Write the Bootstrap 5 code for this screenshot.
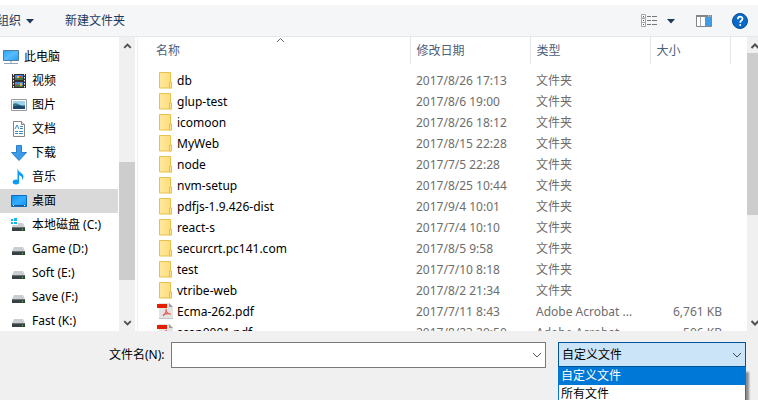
<!DOCTYPE html>
<html lang="zh-CN">
<head>
<meta charset="utf-8">
<meta name="viewport" content="width=device-width, initial-scale=1">
<title>打开</title>
<link href="https://cdn.jsdelivr.net/npm/bootstrap@5.3.0/dist/css/bootstrap.min.css" rel="stylesheet">
<style>
body{font-family:"Noto Sans","Noto Sans CJK SC",sans-serif;font-size:12px;line-height:20px;color:#000;background:#fff}
button{line-height:20px}
.dialog{height:100vh}
.toolbar{margin-top:5px;height:32px;background:#f5f6f7;border-bottom:1px solid #e6e7e8;overflow:hidden}
.tool{border:0;background:none;padding:0;color:#1e395b}
.organize{margin-left:-3px}
.new-folder{margin-left:30px}
.view-tools{margin-right:10px}
.tree{width:119px;padding-top:8px}
.tree a{height:24px;padding-left:11px;gap:5px;color:#000;margin-right:1px;white-space:nowrap}
.tree a.root{padding-left:3px;gap:5px}
.tree a.active{background:#d9d9d9}
.rail{width:16px;background:#f0f0f0}
.rail-main{width:11px}
.rail button{border:0;padding:0;background:none;height:16px;width:16px;line-height:0}
.rail .thumb{background:#cdcdcd}
.tree-before{flex:109}
.tree-thumb{flex:118}
.tree-after{flex:35}
.main-thumb{flex:162}
.main-after{flex:100}
.files{border-left:1px solid #f0f0f0;margin-left:2px;position:relative}
.files table{table-layout:fixed;width:100%}
.files th{font-weight:400;color:#4c607a;height:27px;padding:0 0 0 6px;border-right:1px solid #e5e5e5}
.files th:first-child{padding-left:18px}
.files th:last-child{border:0}
.files td{height:21px;padding:0 0 0 6px;color:#6d6d6d;line-height:21px;white-space:nowrap}
.files td:first-child{padding-left:21px;color:#000}
.files tbody::before{content:"";display:block;height:6px}
.files td svg{vertical-align:top;margin:2px 4px 0 0}
.files td .pdf-icon{margin-left:-2px}
.files td.kb{padding-right:8px;text-align:right}
.c-date,.c-type{width:120px}
.c-size{width:80px}
.c-rest{width:17px}
.sort-mark{position:absolute;left:138px;top:0}
.name-bar{height:69px;background:#f0f0f0;padding:11px 12px 0 109px}
.name-bar label{margin-right:6px;line-height:26px}
.file-name{border:1px solid #7a7a7a;background:#fff;height:26px}
.file-name input{border:0;outline:0;background:none;min-width:0}
.file-name button{border:0;background:none;width:16px;padding:0;line-height:0}
.filter{width:188px;margin-left:12px}
.filter select{appearance:none;width:100%;height:25px;border:1px solid #005499;border-radius:0;background:#cce4f7;padding:0 3px;color:#000;display:block}
.filter-arrow{position:absolute;right:4px;top:10px;pointer-events:none}
.options{position:absolute;top:25px;left:0;width:100%;border:1px solid #0078d7;border-top:0;background:#fff;box-shadow:3px 5px 2px #8c8c8c;line-height:18px;margin:0;padding:0;list-style:none}
.options li{padding:0 2px;height:18px}
.options .chosen{background:#0078d7;color:#fff}
</style>
</head>
<body>
<svg class="position-absolute" width="0" height="0" aria-hidden="true">
<defs>
<linearGradient id="blue" x1="0" y1="0" x2="1" y2="1"><stop stop-color="#2ca7f5"/><stop offset=".5" stop-color="#55bdff"/><stop offset="1" stop-color="#249cf0"/></linearGradient>
<linearGradient id="desk" x1="0" y1="0" x2="1" y2="1"><stop stop-color="#0a8ff0"/><stop offset=".5" stop-color="#35adff"/><stop offset="1" stop-color="#0a8ff0"/></linearGradient>
<linearGradient id="gold"><stop stop-color="#ffe99d"/><stop offset="1" stop-color="#fddc7c"/></linearGradient>
</defs>
<symbol id="folder" viewBox="0 0 14 17"><path d="M.5.5h11v9.500h1v6H.5z" fill="url(#gold)" stroke="#e7c14d"/><path d="M10.500 15.500v-5.500h2v6h-2z" fill="#fbe290" stroke="#e7c14d"/></symbol>
<symbol id="pdf" viewBox="0 0 16 16"><path d="M2 0h10l4 4v12H2z" fill="#e4e4e4"/><path d="M12 0v4h4z" fill="#9c9c9c"/><path d="M2 15.500h14" stroke="#c4c4c4"/><path d="M0 1h10v4H0z" fill="#e61e00"/><path d="M9 6c1 3-1 5-3 7M9 6c-.5 3 2 5 5 5M6 12c2-1 4-2 7-1" fill="none" stroke="#e45b50" stroke-width="1.200"/></symbol>
<symbol id="drive" viewBox="0 0 16 16"><path d="M3 6h9l2 4H1z" fill="#c9ced2"/><path d="M1 10h13v4H1z" fill="#3b4042"/><path d="M1 10h13v1H1z" fill="#6d7376"/><path d="M11 12h1v1h-1z" fill="#36ef46"/></symbol>
<symbol id="up" viewBox="0 0 16 16"><path d="M4.500 11 8 7.500l3.500 3.500" fill="none" stroke="#505050" stroke-width="2"/></symbol>
<symbol id="down" viewBox="0 0 16 16"><path d="M4.500 6 8 9.500 11.500 6" fill="none" stroke="#505050" stroke-width="2"/></symbol>
</svg>
<div class="dialog d-flex flex-column overflow-hidden">
<header class="toolbar d-flex align-items-center flex-shrink-0">
<button class="tool organize d-flex align-items-center" type="button">组织<svg class="ms-1" width="10" height="6"><path d="M1 1h8L5 5.500z" fill="#1e395b"/></svg></button>
<button class="tool new-folder" type="button">新建文件夹</button>
<div class="view-tools d-flex align-items-center ms-auto">
<button class="tool d-flex align-items-center" type="button" aria-label="更改视图">
<svg width="17" height="13"><path d="M.5.500h4v3.500h-4zM.5 4.500h4v4h-4zM.5 8.500h4v4h-4z" fill="#fff" stroke="#a5a5a5"/><path d="M2 2h1v1H2zM2 6h1v1H2zM2 10h1v1H2z" fill="#555"/><path d="M6 2.500h4m1 0h5M6 6.500h4m1 0h5M6 10.500h4m1 0h5" stroke="#777"/></svg>
<svg class="ms-2" width="10" height="6"><path d="M1 1h8L5 5.500z" fill="#1e395b"/></svg></button>
<button class="tool d-flex ms-3 ps-1" type="button" aria-label="预览窗格"><svg width="16" height="12"><path d="M.5.500h15v11H.5z" fill="#fff" stroke="#858585"/><path d="M0 0h16v2H0z" fill="#858585"/><path d="M4.500 2v9" stroke="#aaa"/><path d="M9 2h6v9H9z" fill="#429be3"/><path d="M12 1h1m1 0h1" stroke="#dfeaf3"/></svg></button>
<button class="tool d-flex ms-3 ps-1" type="button" aria-label="帮助"><svg width="16" height="16"><circle cx="8" cy="8" r="7.500" fill="#0869c9" stroke="#084d94"/><path d="M5.800 6.300c0-3.600 4.700-3.100 4.700-.6 0 1.900-2.300 1.700-2.300 4" fill="none" stroke="#fff" stroke-width="1.700"/><circle cx="8.200" cy="12" r="1" fill="#fff"/></svg></button>
</div>
</header>
<main class="d-flex flex-grow-1 overflow-hidden">
<nav class="tree flex-shrink-0 overflow-hidden" aria-label="文件夹">
<a href="#" class="root d-flex align-items-center text-decoration-none"><svg width="16" height="16"><path d="M.5 1.500h15v10H.5z" fill="url(#blue)" stroke="#4b7f9f"/><path d="M7 12h2v2H7z" fill="#c5cfd7"/><path d="M1 14.500h14" stroke="#8fa4b5"/></svg>此电脑</a>
<a href="#" class="d-flex align-items-center text-decoration-none"><svg width="16" height="16"><path d="M1 1h14v14H1z" fill="#35302d"/><path d="M2.500 1v14m11-14v14" stroke="#eee" stroke-dasharray="1.500 1.500"/><path d="M4 2h8v5H4zM4 9h8v5H4z" fill="#4b87da"/><path d="M4 5h8v2H4zM4 12h8v2H4z" fill="#477142"/><path d="M6 3h2v2H6zM9 10h2v3H9z" fill="#e9b736"/><path d="M9 3h2v2H9zM5 11h2v1H5z" fill="#c94835"/></svg>视频</a>
<a href="#" class="d-flex align-items-center text-decoration-none"><svg width="16" height="16"><path d="M.5 2.500h15v11H.5z" fill="#fff" stroke="#999"/><path d="M2 4h12v8H2z" fill="#9bd3ee"/><path d="M2 7c4-3 7 3 12 1v4H2z" fill="#347788"/><path d="M2 10c4-2 7-2 12 0v2H2z" fill="#1c466e"/></svg>图片</a>
<a href="#" class="d-flex align-items-center text-decoration-none"><svg width="16" height="16"><path d="M2.500.500h8l3 3v12h-11z" fill="#fff" stroke="#858585"/><path d="M10.500.500v3h3" fill="#ddd" stroke="#858585"/><path d="M4 8 6 4l2 4M9 5.500h3M9 7.500h3M4 10.500h3m1 0h4M4 12.500h3m1 0h4" fill="none" stroke="#398bc0"/></svg>文档</a>
<a href="#" class="d-flex align-items-center text-decoration-none"><svg width="16" height="16"><path d="M5.500.500h5v7h5L8 15.500.500 7.500h5z" fill="#3b9aea" stroke="#2d80c9"/></svg>下载</a>
<a href="#" class="d-flex align-items-center text-decoration-none"><svg width="16" height="16"><ellipse cx="5" cy="13" rx="3.300" ry="2.500" fill="#0b9cf5"/><path d="M7 0c0 3.500 6 4 5.500 8-.2 2-1.500 3-1.500 3 1-4-2-4-3-5v7H6.500V0z" fill="#0b9cf5"/></svg>音乐</a>
<a href="#" class="active d-flex align-items-center text-decoration-none" aria-current="true"><svg width="16" height="16"><path d="M.5 2.500h15v11H.5z" fill="url(#desk)" stroke="#0d6dc0"/><path d="M1 12.500h14" stroke="#1e5d96"/><path d="M2 12.500h1m10 0h1" stroke="#e7f4ff"/></svg>桌面</a>
<a href="#" class="d-flex align-items-center text-decoration-none"><svg width="16" height="16"><use href="#drive" width="16" height="16"/><path d="M0 1h7v7H0z" fill="#fff"/><path d="M0 2h2v2H0zM3 1h3v3H3zM0 5h2v2H0zM3 5h3v2H3z" fill="#12b8ee"/></svg>本地磁盘 (C:)</a>
<a href="#" class="d-flex align-items-center text-decoration-none"><svg width="16" height="16"><use href="#drive"/></svg>Game (D:)</a>
<a href="#" class="d-flex align-items-center text-decoration-none"><svg width="16" height="16"><use href="#drive"/></svg>Soft (E:)</a>
<a href="#" class="d-flex align-items-center text-decoration-none"><svg width="16" height="16"><use href="#drive"/></svg>Save (F:)</a>
<a href="#" class="d-flex align-items-center text-decoration-none"><svg width="16" height="16"><use href="#drive"/></svg>Fast (K:)</a>
</nav>
<div class="rail d-flex flex-column flex-shrink-0">
<button type="button" aria-label="向上滚动"><svg width="15" height="16"><use href="#up"/></svg></button>
<div class="tree-before"></div><div class="tree-thumb thumb"></div><div class="tree-after"></div>
<button type="button" aria-label="向下滚动"><svg width="15" height="16"><use href="#down"/></svg></button>
</div>
<section class="files flex-grow-1 overflow-hidden">
<svg class="sort-mark" width="9" height="6"><path d="M1 5 4.500 1.500 8 5" fill="none" stroke="#666"/></svg>
<table>
<colgroup><col><col class="c-date"><col class="c-type"><col class="c-size"><col class="c-rest"></colgroup>
<thead><tr><th>名称</th><th>修改日期</th><th>类型</th><th>大小</th><th></th></tr></thead>
<tbody>
<tr><td><svg width="14" height="17"><use href="#folder"/></svg>db</td><td>2017/8/26 17:13</td><td>文件夹</td><td></td><td></td></tr>
<tr><td><svg width="14" height="17"><use href="#folder"/></svg>glup-test</td><td>2017/8/6 19:00</td><td>文件夹</td><td></td><td></td></tr>
<tr><td><svg width="14" height="17"><use href="#folder"/></svg>icomoon</td><td>2017/8/26 18:12</td><td>文件夹</td><td></td><td></td></tr>
<tr><td><svg width="14" height="17"><use href="#folder"/></svg>MyWeb</td><td>2017/8/15 22:28</td><td>文件夹</td><td></td><td></td></tr>
<tr><td><svg width="14" height="17"><use href="#folder"/></svg>node</td><td>2017/7/5 22:28</td><td>文件夹</td><td></td><td></td></tr>
<tr><td><svg width="14" height="17"><use href="#folder"/></svg>nvm-setup</td><td>2017/8/25 10:44</td><td>文件夹</td><td></td><td></td></tr>
<tr><td><svg width="14" height="17"><use href="#folder"/></svg>pdfjs-1.9.426-dist</td><td>2017/9/4 10:01</td><td>文件夹</td><td></td><td></td></tr>
<tr><td><svg width="14" height="17"><use href="#folder"/></svg>react-s</td><td>2017/7/4 10:10</td><td>文件夹</td><td></td><td></td></tr>
<tr><td><svg width="14" height="17"><use href="#folder"/></svg>securcrt.pc141.com</td><td>2017/8/5 9:58</td><td>文件夹</td><td></td><td></td></tr>
<tr><td><svg width="14" height="17"><use href="#folder"/></svg>test</td><td>2017/7/10 8:18</td><td>文件夹</td><td></td><td></td></tr>
<tr><td><svg width="14" height="17"><use href="#folder"/></svg>vtribe-web</td><td>2017/8/2 21:34</td><td>文件夹</td><td></td><td></td></tr>
<tr><td><svg class="pdf-icon" width="16" height="16"><use href="#pdf"/></svg>Ecma-262.pdf</td><td>2017/7/11 8:43</td><td>Adobe Acrobat ...</td><td class="kb">6,761 KB</td><td></td></tr>
<tr><td><svg class="pdf-icon" width="16" height="16"><use href="#pdf"/></svg>scan0001.pdf</td><td>2017/8/23 20:50</td><td>Adobe Acrobat ...</td><td class="kb">506 KB</td><td></td></tr>
</tbody>
</table>
</section>
<div class="rail rail-main d-flex flex-column flex-shrink-0 overflow-hidden">
<button type="button" aria-label="向上滚动"><svg width="16" height="16"><use href="#up"/></svg></button>
<div class="thumb main-thumb"></div><div class="main-after"></div>
<button type="button" aria-label="向下滚动"><svg width="16" height="16"><use href="#down"/></svg></button>
</div>
</main>
<footer class="name-bar d-flex align-items-start flex-shrink-0">
<label for="fileName">文件名(N):</label>
<div class="file-name d-flex flex-grow-1"><input id="fileName" class="flex-grow-1" type="text"><button type="button" aria-label="最近的文件名"><svg width="10" height="6"><path d="M1 1l4 4 4-4" fill="none" stroke="#555"/></svg></button></div>
<div class="filter position-relative flex-shrink-0">
<select aria-label="文件类型"><option>自定义文件</option><option>所有文件</option></select>
<svg class="filter-arrow" width="10" height="6"><path d="M1 1l4 4 4-4" fill="none" stroke="#445"/></svg>
<ul class="options"><li class="chosen">自定义文件</li><li>所有文件</li></ul>
</div>
</footer>
</div>
<script src="https://cdn.jsdelivr.net/npm/bootstrap@5.3.0/dist/js/bootstrap.bundle.min.js"></script>
</body>
</html>
